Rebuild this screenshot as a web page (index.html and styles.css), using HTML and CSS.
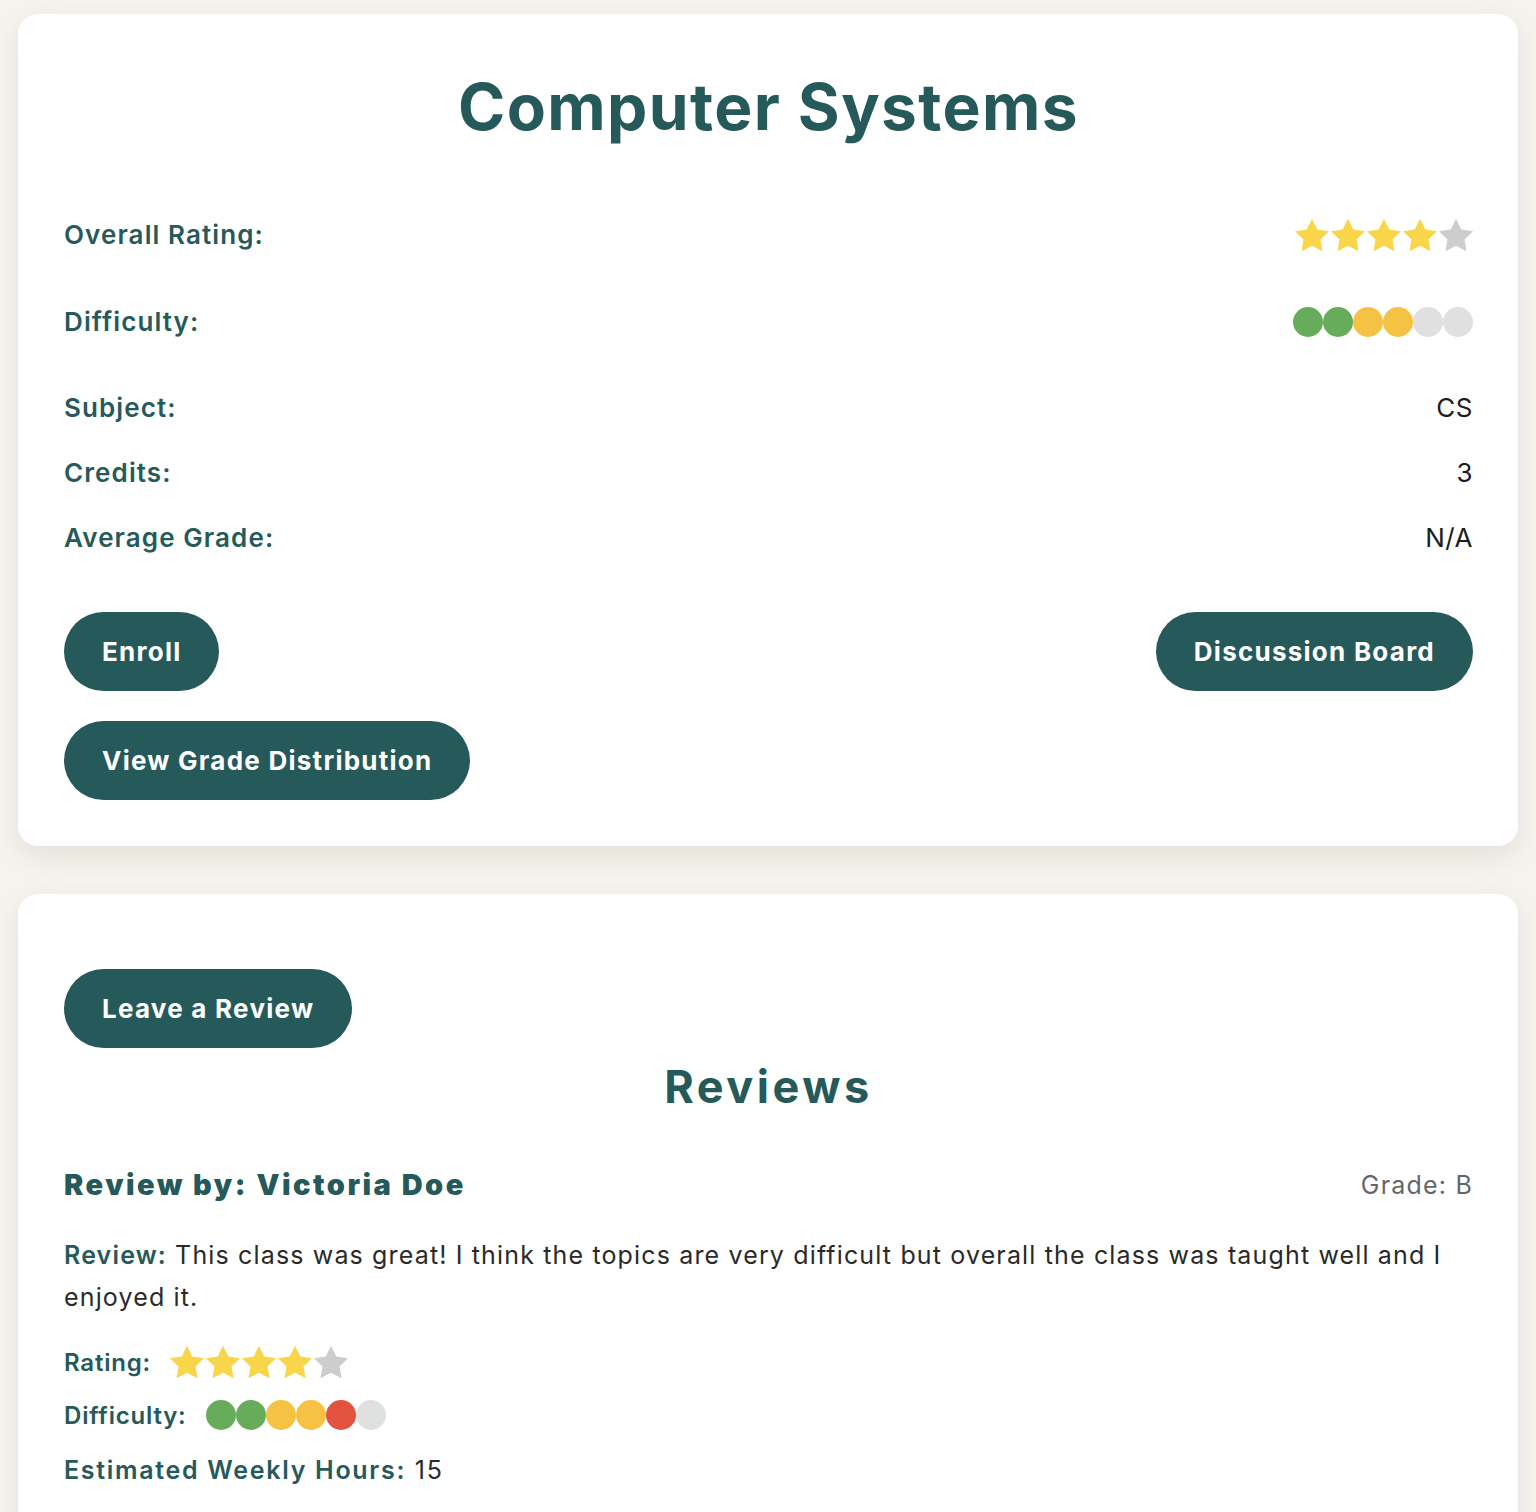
FILE: index.html
```html
<!DOCTYPE html>
<html lang="en">
<head>
<meta charset="utf-8">
<title>Computer Systems</title>
<link rel="stylesheet" href="styles.css">
</head>
<body>
<main class="page">
  <section class="card course">
    <h1 class="title">Computer Systems</h1>

    <div class="row row-rating">
      <span class="label">Overall Rating:</span>
      <span class="stars">
        <svg class="star on" viewBox="2 1.5 20 20"><path d="M12 2l3.09 6.26L22 9.27l-5 4.87 1.18 6.88L12 17.770l-6.18 3.25L7 14.14 2 9.27l6.91-1.01L12 2z"/></svg>
        <svg class="star on" viewBox="2 1.5 20 20"><path d="M12 2l3.09 6.26L22 9.27l-5 4.87 1.18 6.88L12 17.77l-6.18 3.25L7 14.14 2 9.27l6.91-1.01L12 2z"/></svg>
        <svg class="star on" viewBox="2 1.5 20 20"><path d="M12 2l3.09 6.26L22 9.27l-5 4.87 1.18 6.88L12 17.77l-6.18 3.25L7 14.14 2 9.27l6.91-1.01L12 2z"/></svg>
        <svg class="star on" viewBox="2 1.5 20 20"><path d="M12 2l3.09 6.26L22 9.27l-5 4.87 1.18 6.88L12 17.77l-6.18 3.25L7 14.14 2 9.27l6.91-1.01L12 2z"/></svg>
        <svg class="star off" viewBox="2 1.5 20 20"><path d="M12 2l3.09 6.26L22 9.27l-5 4.87 1.18 6.88L12 17.77l-6.18 3.25L7 14.14 2 9.27l6.91-1.01L12 2z"/></svg>
      </span>
    </div>

    <div class="row row-diff">
      <span class="label">Difficulty:</span>
      <span class="dots">
        <span class="dot green"></span><span class="dot green"></span><span class="dot yellow"></span><span class="dot yellow"></span><span class="dot gray"></span><span class="dot gray"></span>
      </span>
    </div>

    <div class="row row-text first-text">
      <span class="label">Subject:</span>
      <span class="value">CS</span>
    </div>
    <div class="row row-text">
      <span class="label">Credits:</span>
      <span class="value">3</span>
    </div>
    <div class="row row-text">
      <span class="label">Average Grade:</span>
      <span class="value">N/A</span>
    </div>

    <div class="actions">
      <button class="btn">Enroll</button>
      <button class="btn">Discussion Board</button>
    </div>
    <button class="btn btn-grade">View Grade Distribution</button>
  </section>

  <section class="card reviews">
    <button class="btn btn-review">Leave a Review</button>
    <h2 class="reviews-title">Reviews</h2>

    <article class="review">
      <div class="review-head">
        <h3 class="reviewer">Review by: Victoria Doe</h3>
        <span class="grade">Grade: B</span>
      </div>
      <p class="review-text"><strong class="rlabel">Review:</strong> This class was great! I think the topics are very difficult but overall the class was taught well and I enjoyed it.</p>
      <div class="mini-row mini-rating">
        <span class="mlabel">Rating:</span>
        <span class="stars">
          <svg class="star on" viewBox="2 1.5 20 20"><path d="M12 2l3.09 6.26L22 9.27l-5 4.87 1.18 6.88L12 17.77l-6.18 3.25L7 14.14 2 9.27l6.91-1.01L12 2z"/></svg>
          <svg class="star on" viewBox="2 1.5 20 20"><path d="M12 2l3.09 6.26L22 9.27l-5 4.87 1.18 6.88L12 17.77l-6.18 3.25L7 14.14 2 9.27l6.91-1.01L12 2z"/></svg>
          <svg class="star on" viewBox="2 1.5 20 20"><path d="M12 2l3.09 6.26L22 9.27l-5 4.87 1.18 6.88L12 17.77l-6.18 3.25L7 14.14 2 9.27l6.91-1.01L12 2z"/></svg>
          <svg class="star on" viewBox="2 1.5 20 20"><path d="M12 2l3.09 6.26L22 9.27l-5 4.87 1.18 6.88L12 17.77l-6.18 3.25L7 14.14 2 9.27l6.91-1.01L12 2z"/></svg>
          <svg class="star off" viewBox="2 1.5 20 20"><path d="M12 2l3.09 6.26L22 9.27l-5 4.87 1.18 6.88L12 17.77l-6.18 3.25L7 14.14 2 9.27l6.91-1.01L12 2z"/></svg>
        </span>
      </div>
      <div class="mini-row mini-diff">
        <span class="mlabel">Difficulty:</span>
        <span class="dots">
          <span class="dot green"></span><span class="dot green"></span><span class="dot yellow"></span><span class="dot yellow"></span><span class="dot red"></span><span class="dot gray"></span>
        </span>
      </div>
      <p class="hours"><strong class="rlabel">Estimated Weekly Hours:</strong> 15</p>
    </article>
  </section>
</main>
</body>
</html>
```

FILE: styles.css
```css
* { box-sizing: border-box; }

html, body {
  margin: 0;
  padding: 0;
}

body {
  background: #f6f3ed;
  font-family: Inter, "Open Sans", "Liberation Sans", sans-serif;
  color: #222;
}

.page {
  width: 1500px;
  margin: 0 auto;
  padding-top: 14px;
  display: flex;
  flex-direction: column;
  gap: 48px;
}

.card {
  background: #fff;
  border-radius: 20px;
  padding: 45px 45px 45px 46px;
  box-shadow: 0 10px 28px rgba(60, 50, 30, 0.09);
}

.course {
  display: flex;
  flex-direction: column;
  padding-bottom: 46px;
}

.title {
  margin: 9px 0 72px;
  text-align: center;
  font-size: 64px;
  line-height: 77px;
  font-weight: 700;
  color: #265a5a;
  letter-spacing: 1.4px;
}

.row {
  display: flex;
  justify-content: space-between;
  align-items: center;
}

.label {
  font-size: 26px;
  font-weight: 600;
  color: #265a5a;
  line-height: 30px;
  letter-spacing: 1.1px;
}

.value {
  font-size: 26px;
  line-height: 30px;
  color: #1c1c1c;
  letter-spacing: 0.5px;
}

.row-rating { height: 36px; }
.row-diff { height: 30px; margin-top: 54px; }
.row-text { height: 30px; margin-top: 35px; }
.row-text.first-text { margin-top: 56px; }

.stars {
  display: flex;
  gap: 2px;
}

.star {
  width: 34px;
  height: 34px;
  display: block;
}
.star.on { fill: #f9d54a; }
.star.off { fill: #cdcdcd; }

.dots { display: flex; }

.dot {
  width: 30px;
  height: 30px;
  border-radius: 50%;
  display: block;
}
.dot.green { background: #67ac5b; }
.dot.yellow { background: #f5c243; }
.dot.red { background: #e2533f; }
.dot.gray { background: #e0e0e0; }

.actions {
  display: flex;
  justify-content: space-between;
  margin-top: 59px;
}

.btn {
  font-family: inherit;
  background: #265a5a;
  color: #fff;
  border: 0;
  border-radius: 40px;
  height: 79px;
  padding: 0 38px;
  font-size: 26px;
  font-weight: 700;
  letter-spacing: 1.25px;
  cursor: pointer;
  white-space: nowrap;
}

.btn-grade {
  align-self: flex-start;
  margin-top: 30px;
}

.reviews {
  display: flex;
  flex-direction: column;
  padding-bottom: 60px;
}

.btn-review {
  align-self: flex-start;
  margin-top: 30px;
}

.reviews-title {
  margin: 12px 0 0;
  text-align: center;
  font-size: 45px;
  line-height: 54px;
  font-weight: 700;
  color: #265a5a;
  letter-spacing: 3.5px;
}

.review-head {
  margin-top: 53px;
  display: flex;
  justify-content: space-between;
  align-items: center;
  height: 36px;
}

.reviewer {
  margin: 0;
  font-size: 29px;
  line-height: 36px;
  font-weight: 900;
  color: #265a5a;
  letter-spacing: 2.5px;
}

.grade {
  font-size: 25px;
  color: #666;
  letter-spacing: 1.2px;
}

.review-text {
  margin: 31px 0 0;
  font-size: 25px;
  line-height: 42px;
  color: #2a2a2a;
  letter-spacing: 1.15px;
}

.rlabel {
  font-weight: 600;
  color: #265a5a;
}

.mini-row {
  display: flex;
  align-items: center;
  gap: 19px;
}

.mlabel {
  font-size: 24px;
  font-weight: 600;
  color: #265a5a;
  letter-spacing: 0.8px;
}

.mini-rating {
  margin-top: 26px;
  height: 36px;
}

.mini-diff {
  margin-top: 18px;
  height: 34px;
}

.hours {
  margin: 23px 0 0;
  font-size: 25px;
  line-height: 30px;
  color: #2a2a2a;
  letter-spacing: 1.7px;
}
```
